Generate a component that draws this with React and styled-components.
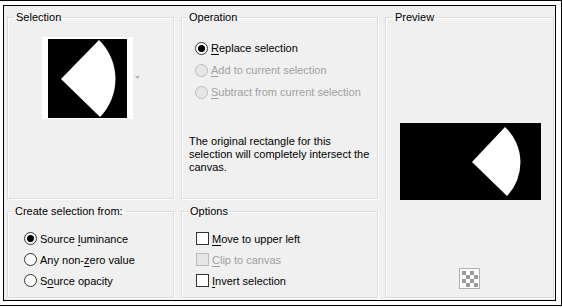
import React from "react";
import styled, { createGlobalStyle } from "styled-components";

const Global = createGlobalStyle`
  html, body { margin: 0; padding: 0; background: #fff; }
  body { font-family: "Liberation Sans", Arial, sans-serif; font-size: 11px; color: #000; }
  * { box-sizing: border-box; }
`;

const Outer = styled.div`
  width: 562px;
  height: 306px;
  border-top: 1px solid #000;
  border-right: 1px solid #000;
  border-bottom: 1px solid #000;
  padding: 4px 5px 4px 3px;
  background: #fff;
`;

const Inner = styled.div`
  width: 553px;
  height: 296px;
  border: 1px solid #000;
  background: #f0f0f0;
  padding: 4px 1px 2px 3px;
  display: grid;
  grid-template-columns: 167px 197px 169px;
  grid-template-rows: 189px 94px;
  column-gap: 7px;
  row-gap: 5px;
`;

const Group = styled.fieldset`
  margin: 0;
  padding: 0;
  min-width: 0;
  border: 1px solid #dcdcdc;
  box-shadow: inset 1px 1px 0 #fff, 1px 1px 0 #fff;
  grid-column: ${(p) => p.$col};
  grid-row: ${(p) => p.$row};
`;

const Legend = styled.legend`
  margin-left: ${(p) => p.$offset || 6}px;
  padding: 0 2px;
  line-height: 14px;
  font-size: 11px;
`;

const Body = styled.div`
  display: flex;
  flex-direction: column;
  align-items: ${(p) => p.$align || "stretch"};
  padding: ${(p) => p.$pad || "0"};
`;

const ThumbRow = styled.div`
  display: flex;
  align-items: center;
  justify-content: center;
  gap: 2px;
  padding-left: 1px;
`;

const Thumb = styled.div`
  background: #fff;
  padding: 2px 6px 1px 6px;
  display: flex;
`;

const Arrow = styled.svg`
  display: block;
  width: 5px;
  height: 3px;
  margin-top: -2px;
`;

const Options = styled.div`
  display: flex;
  flex-direction: column;
  padding-left: ${(p) => p.$indent || 0}px;
`;

const Row = styled.label`
  display: flex;
  align-items: center;
  gap: 3px;
  height: ${(p) => p.$h || 22}px;
  color: ${(p) => (p.$disabled ? "#a0a0a0" : "#000")};
  white-space: nowrap;
`;

const Radio = styled.span`
  width: 13px;
  height: 13px;
  border-radius: 50%;
  border: 1px solid ${(p) => (p.$disabled ? "#bcbcbc" : "#333")};
  background: ${(p) => (p.$disabled ? "#e6e6e6" : "#fff")};
  display: flex;
  align-items: center;
  justify-content: center;
  flex: none;
  &::after {
    content: "";
    width: 7px;
    height: 7px;
    border-radius: 50%;
    background: #000;
    display: ${(p) => (p.$checked ? "block" : "none")};
  }
`;

const Check = styled.span`
  width: 13px;
  height: 13px;
  border: 1px solid ${(p) => (p.$disabled ? "#bcbcbc" : "#333")};
  background: ${(p) => (p.$disabled ? "#e6e6e6" : "#fff")};
  flex: none;
`;

const Key = styled.span`
  text-decoration: underline;
  text-underline-offset: 2px;
`;

const Note = styled.p`
  margin: 32px 0 0 0;
  line-height: 13px;
  white-space: nowrap;
`;

const PreviewBox = styled.div`
  margin-top: 99px;
  margin-left: 1px;
  width: 141px;
  height: 77px;
  background: #000;
`;

const Checker = styled.svg`
  display: block;
  margin-top: 68px;
`;

const Wedge = ({ w, h, d }) => (
  <svg width={w} height={h} viewBox={`0 0 ${w} ${h}`} style={{ display: "block" }}>
    <rect width={w} height={h} fill="#000" />
    <path d={d} fill="#fff" />
  </svg>
);

export default function App() {
  return (
    <>
      <Global />
      <Outer>
        <Inner>
          <Group $col="1" $row="1">
            <Legend $offset={6}>Selection</Legend>
            <Body $pad="13px 0 0 0">
              <ThumbRow>
                <Thumb>
                  <Wedge w={79} h={79} d="M13 40 L51 1 A54.5 54.5 0 0 1 52 78 Z" />
                </Thumb>
                <Arrow viewBox="0 0 5 3">
                  <path d="M0 0 H5 L2.5 3 Z" fill="#b4b4b4" />
                </Arrow>
              </ThumbRow>
            </Body>
          </Group>

          <Group $col="2" $row="1">
            <Legend $offset={5}>Operation</Legend>
            <Body $pad="13px 0 0 7px">
              <Options $indent={6}>
                <Row>
                  <Radio $checked />
                  <span><Key>R</Key>eplace selection</span>
                </Row>
                <Row $disabled>
                  <Radio $disabled />
                  <span><Key>A</Key>dd to current selection</span>
                </Row>
                <Row $disabled>
                  <Radio $disabled />
                  <span><Key>S</Key>ubtract from current selection</span>
                </Row>
              </Options>
              <Note>
                The original rectangle for this<br />
                selection will completely intersect the<br />
                canvas.
              </Note>
            </Body>
          </Group>

          <Group $col="3" $row="1 / span 2">
            <Legend $offset={7}>Preview</Legend>
            <Body $align="center">
              <PreviewBox>
                <Wedge w={141} h={77} d="M72 39 L105 4 A48.5 48.5 0 0 1 107 73 Z" />
              </PreviewBox>
              <Checker width="21" height="21" viewBox="0 0 21 21">
                <rect x="0.5" y="0.5" width="20" height="20" fill="#fff" stroke="#b0b0b0" />
                {[0, 1, 2, 3].map((r) =>
                  [0, 1, 2, 3].map((c) =>
                    (r + c) % 2 === 0 ? (
                      <rect key={`${r}-${c}`} x={3 + c * 4} y={3 + r * 4} width="4" height="4" fill="#9a9a9a" />
                    ) : null
                  )
                )}
              </Checker>
            </Body>
          </Group>

          <Group $col="1" $row="2">
            <Legend $offset={5}>Create selection from:</Legend>
            <Body $pad="10px 0 0 16px">
              <Options>
                <Row $h={21}>
                  <Radio $checked />
                  <span>Source <Key>l</Key>uminance</span>
                </Row>
                <Row $h={21}>
                  <Radio />
                  <span>Any non-<Key>z</Key>ero value</span>
                </Row>
                <Row $h={21}>
                  <Radio />
                  <span>S<Key>o</Key>urce opacity</span>
                </Row>
              </Options>
            </Body>
          </Group>

          <Group $col="2" $row="2">
            <Legend $offset={6}>Options</Legend>
            <Body $pad="10px 0 0 14px">
              <Options>
                <Row $h={21}>
                  <Check />
                  <span><Key>M</Key>ove to upper left</span>
                </Row>
                <Row $h={21} $disabled>
                  <Check $disabled />
                  <span><Key>C</Key>lip to canvas</span>
                </Row>
                <Row $h={21}>
                  <Check />
                  <span><Key>I</Key>nvert selection</span>
                </Row>
              </Options>
            </Body>
          </Group>
        </Inner>
      </Outer>
    </>
  );
}
